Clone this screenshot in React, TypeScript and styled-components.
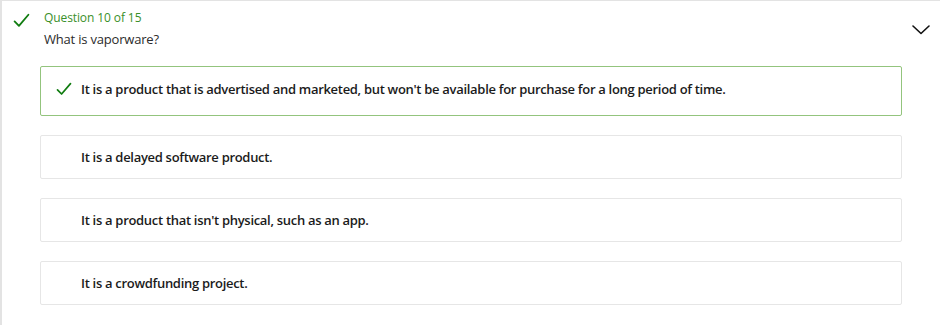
import React from 'react';
import styled, {createGlobalStyle} from "styled-components";

const GlobalStyle = createGlobalStyle`
  html, body {
    margin: 0;
    padding: 0;
    background: #fff;
  }
  body {
    font-family: "Open Sans", "Noto Sans", sans-serif;
  }
`

type Option = {
    text: string;
    correct?: boolean;
}

const options: Option[] = [
    {text: "It is a product that is advertised and marketed, but won't be available for purchase for a long period of time.", correct: true},
    {text: "It is a delayed software product."},
    {text: "It is a product that isn't physical, such as an app."},
    {text: "It is a crowdfunding project."},
]

const CheckIcon = ({size}: {size: number}) => (
    <svg width={size} height={size} viewBox="0 0 16 16" fill="none">
        <path d="M1.5 8.8 L5.6 13 L14.5 2.6" stroke="#107c10" strokeWidth="1.7" strokeLinecap="round"
              strokeLinejoin="round"/>
    </svg>
)

const ChevronIcon = () => (
    <svg width="18" height="10" viewBox="0 0 18 10" fill="none">
        <path d="M1 1 L9 8.5 L17 1" stroke="#111" strokeWidth="1.6" strokeLinecap="round" strokeLinejoin="round"/>
    </svg>
)

export default function App() {
    return (
        <>
            <GlobalStyle/>
            <Panel>
                <Header>
                    <StatusMark><CheckIcon size={17}/></StatusMark>
                    <Titles>
                        <Counter>Question 10 of 15</Counter>
                        <Question>What is vaporware?</Question>
                    </Titles>
                    <Toggle><ChevronIcon/></Toggle>
                </Header>
                <Options>
                    {options.map((o) => (
                        <Answer key={o.text} $correct={o.correct}>
                            <Mark>{o.correct && <CheckIcon size={16}/>}</Mark>
                            <AnswerText>{o.text}</AnswerText>
                        </Answer>
                    ))}
                </Options>
            </Panel>
        </>
    );
}

const Panel = styled.section`
  width: 940px;
  height: 325px;
  box-sizing: border-box;
  border-top: 1px solid #e3e3e3;
  border-left: 2px solid #e3e3e3;
  padding: 9px 0 0 0;
`

const Header = styled.div`
  display: flex;
  align-items: flex-start;
`

const StatusMark = styled.div`
  width: 42px;
  display: flex;
  padding-top: 2px;
  padding-left: 11px;
  box-sizing: border-box;
`

const Titles = styled.div`
  flex: 1;
  display: flex;
  flex-direction: column;
  gap: 3px;
`

const Counter = styled.div`
  color: #3a8f2a;
  font-size: 12px;
  line-height: 16px;
  letter-spacing: -0.1px;
`

const Question = styled.div`
  color: #2b2b2b;
  font-size: 13px;
  line-height: 20px;
  letter-spacing: -0.2px;
`

const Toggle = styled.div`
  width: 38px;
  padding-top: 15px;
  display: flex;
  justify-content: center;
`

const Options = styled.div`
  display: flex;
  flex-direction: column;
  gap: 19px;
  margin: 17px 0 0 38px;
  width: 862px;
`

const Answer = styled.div<{ $correct?: boolean }>`
  display: flex;
  align-items: center;
  box-sizing: border-box;
  height: ${p => p.$correct ? '50px' : '44px'};
  border: 1px solid ${p => p.$correct ? '#93c47d' : '#e6e6e6'};
  border-radius: 2px;
  padding: 0 0 ${p => p.$correct ? '4px' : '0'} 15px;
`

const Mark = styled.div`
  width: 25px;
  height: 16px;
  display: flex;
  align-items: center;
`

const AnswerText = styled.div`
  color: #1b1b1b;
  font-size: 13px;
  font-weight: 600;
  letter-spacing: -0.3px;
`
